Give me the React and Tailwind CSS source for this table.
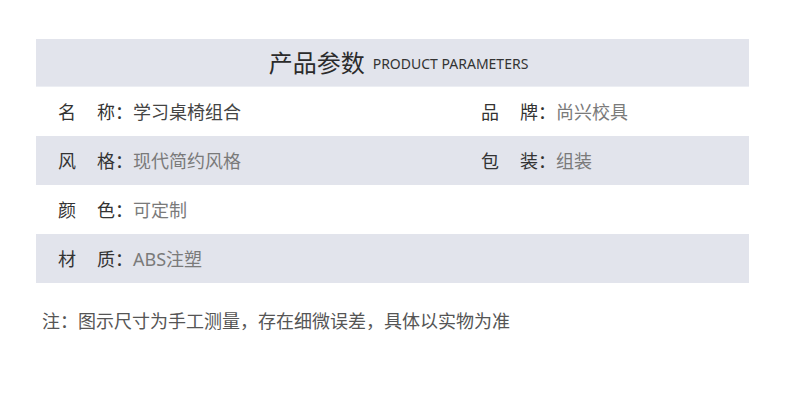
const FONT = { fontFamily: '"Noto Sans", "Noto Sans CJK SC", sans-serif' };

const rows = [
  { left: ["名", "称", "学习桌椅组合", true], right: ["品", "牌", "尚兴校具"], gray: false },
  { left: ["风", "格", "现代简约风格"], right: ["包", "装", "组装"], gray: true },
  { left: ["颜", "色", "可定制"], gray: false },
  { left: ["材", "质", "ABS注塑"], gray: true },
];

function Field({ a, b, value, dark }) {
  return (
    <div className="flex items-center text-[18px] leading-none">
      <span className="text-[#333]">{a}</span>
      <span className="ml-[21px] text-[#333]">{b}：</span>
      <span className={dark ? "text-[#444]" : "text-[#7a7a7a]"}>{value}</span>
    </div>
  );
}

export default function App() {
  return (
    <div className="w-[790px] h-[412px] bg-white pt-[39px]" style={FONT}>
      <div className="mx-[36px] w-[713px]">
        <div className="h-[48px] bg-[#e2e4ec] border-b border-[#eceef3] flex items-center justify-center pl-[12px]">
          <span className="text-[24px] text-[#2b2b2b] leading-none">产品参数</span>
          <span className="ml-[8px] text-[14px] text-[#333] leading-none mt-[3px]">PRODUCT PARAMETERS</span>
        </div>
        {rows.map((r, i) => (
          <div
            key={i}
            className={`h-[49px] flex items-center pl-[22px] ${r.gray ? "bg-[#e2e4ec]" : "bg-white"}`}
          >
            <div className="w-[423px]">
              <Field a={r.left[0]} b={r.left[1]} value={r.left[2]} dark={r.left[3]} />
            </div>
            {r.right && <Field a={r.right[0]} b={r.right[1]} value={r.right[2]} />}
          </div>
        ))}
      </div>
      <p className="mt-[29px] ml-[42px] text-[18px] text-[#555] leading-none">
        注：图示尺寸为手工测量，存在细微误差，具体以实物为准
      </p>
    </div>
  );
}
